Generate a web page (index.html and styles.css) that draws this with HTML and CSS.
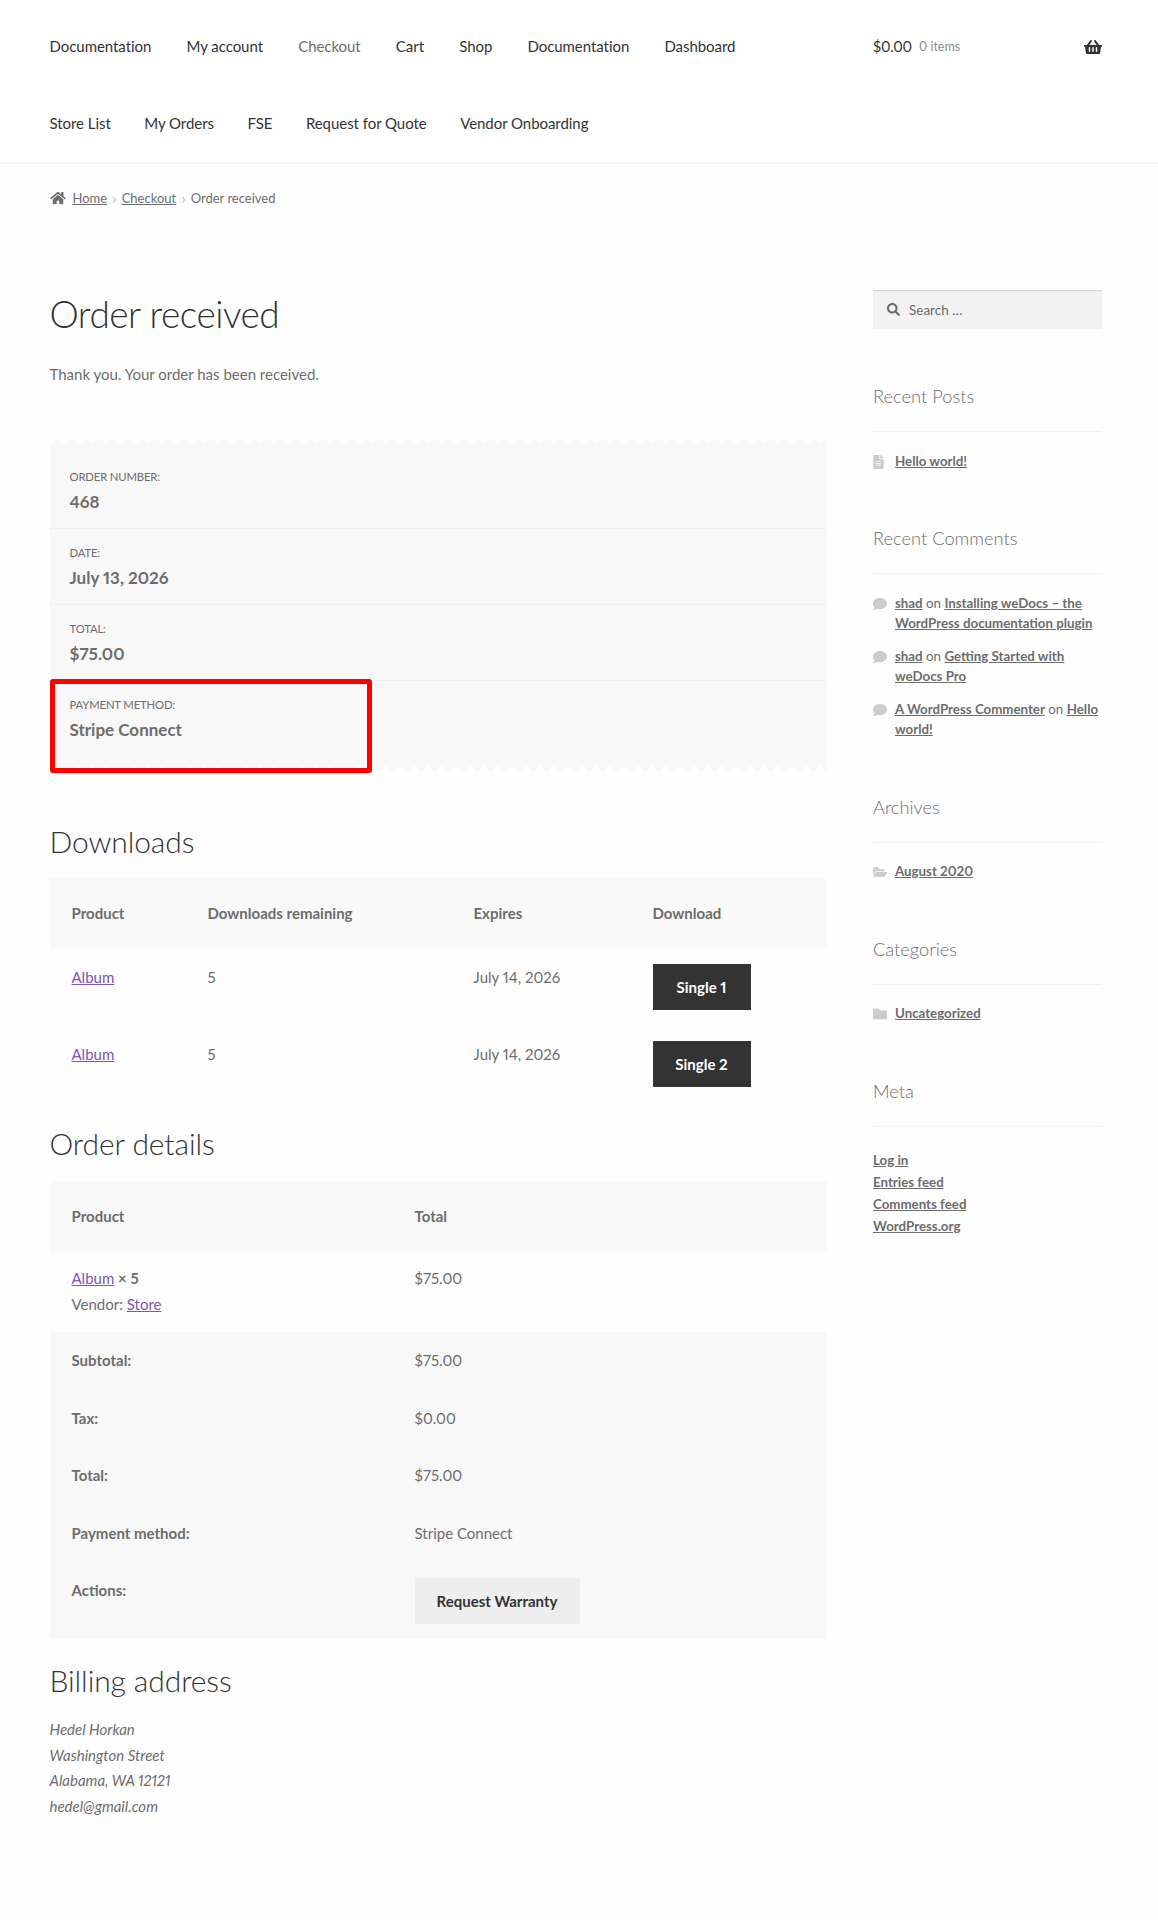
FILE: index.html
```html
<!DOCTYPE html>
<html lang="en">
<head>
<meta charset="utf-8">
<title>Order received</title>
<link rel="stylesheet" href="styles.css">
</head>
<body>
<header class="site-header">
  <nav class="main-nav">
    <div class="nav-row"><a href="#">Documentation</a><a href="#">My account</a><a href="#" class="current">Checkout</a><a href="#">Cart</a><a href="#">Shop</a><a href="#">Documentation</a><a href="#">Dashboard</a></div>
    <div class="nav-row nav-row-second"><a href="#">Store List</a><a href="#">My Orders</a><a href="#">FSE</a><a href="#">Request for Quote</a><a href="#">Vendor Onboarding</a></div>
  </nav>
  <div class="cart">
    <span class="cart-amount">$0.00</span><span class="cart-count">0 items</span>
    <svg class="cart-icon" viewBox="0 0 576 512"><path d="M576 216v16c0 13.255-10.745 24-24 24h-8l-26.113 182.788C514.509 462.435 494.257 480 470.37 480H105.63c-23.887 0-44.139-17.565-47.518-41.212L32 256h-8c-13.255 0-24-10.745-24-24v-16c0-13.255 10.745-24 24-24h67.341l106.78-146.821c10.395-14.292 30.407-17.453 44.701-7.058 14.293 10.395 17.453 30.408 7.058 44.701L170.477 192h235.046L326.12 82.821c-10.395-14.292-7.234-34.306 7.059-44.701 14.291-10.395 34.306-7.235 44.701 7.058L484.659 192H552c13.255 0 24 10.745 24 24zM312 392V280c0-13.255-10.745-24-24-24s-24 10.745-24 24v112c0 13.255 10.745 24 24 24s24-10.745 24-24zm112 0V280c0-13.255-10.745-24-24-24s-24 10.745-24 24v112c0 13.255 10.745 24 24 24s24-10.745 24-24zm-224 0V280c0-13.255-10.745-24-24-24s-24 10.745-24 24v112c0 13.255 10.745 24 24 24s24-10.745 24-24z"/></svg>
  </div>
</header>

<div class="breadcrumb">
  <svg class="home-icon" viewBox="0 0 576 512"><path d="M280.37 148.26L96 300.11V464a16 16 0 0 0 16 16l112.06-.29a16 16 0 0 0 15.92-16V368a16 16 0 0 1 16-16h64a16 16 0 0 1 16 16v95.64a16 16 0 0 0 16 16.05L464 480a16 16 0 0 0 16-16V300L295.67 148.26a12.19 12.19 0 0 0-15.3 0zM571.6 251.47L488 182.56V44.05a12 12 0 0 0-12-12h-56a12 12 0 0 0-12 12v72.61L318.47 43a48 48 0 0 0-61 0L4.34 251.47a12 12 0 0 0-1.6 16.9l25.5 31A12 12 0 0 0 45.15 301l235.22-193.74a12.19 12.19 0 0 1 15.3 0L530.9 301a12 12 0 0 0 16.9-1.6l25.5-31a12 12 0 0 0-1.7-16.93z"/></svg>
  <a href="#">Home</a><span class="sep">›</span><a href="#">Checkout</a><span class="sep">›</span><span>Order received</span>
</div>

<div class="content">
  <main class="main">
    <h1 class="page-title">Order received</h1>
    <p class="thanks">Thank you. Your order has been received.</p>

    <div class="order-box">
      <ul class="overview">
        <li><span class="ov-label">Order number:</span><strong class="ov-value">468</strong></li>
        <li><span class="ov-label">Date:</span><strong class="ov-value">July 13, 2026</strong></li>
        <li><span class="ov-label">Total:</span><strong class="ov-value">$75.00</strong></li>
        <li><span class="ov-label">Payment method:</span><strong class="ov-value">Stripe Connect</strong></li>
      </ul>
      <div class="highlight"></div>
    </div>

    <h2 class="section-title downloads-title">Downloads</h2>
    <table class="data-table downloads">
      <colgroup><col class="c1"><col class="c2"><col class="c3"><col class="c4"></colgroup>
      <thead>
        <tr><th>Product</th><th>Downloads remaining</th><th>Expires</th><th>Download</th></tr>
      </thead>
      <tbody>
        <tr><td><a href="#" class="plink">Album</a></td><td>5</td><td>July 14, 2026</td><td><a href="#" class="btn btn-dark">Single 1</a></td></tr>
        <tr><td><a href="#" class="plink">Album</a></td><td>5</td><td>July 14, 2026</td><td><a href="#" class="btn btn-dark">Single 2</a></td></tr>
      </tbody>
    </table>

    <h2 class="section-title">Order details</h2>
    <table class="data-table details">
      <colgroup><col class="d1"><col class="d2"></colgroup>
      <thead>
        <tr><th>Product</th><th>Total</th></tr>
      </thead>
      <tbody>
        <tr><td><a href="#" class="plink">Album</a> <strong>× 5</strong><br>Vendor: <a href="#" class="plink">Store</a></td><td>$75.00</td></tr>
      </tbody>
      <tfoot>
        <tr><th>Subtotal:</th><td>$75.00</td></tr>
        <tr><th>Tax:</th><td>$0.00</td></tr>
        <tr><th>Total:</th><td>$75.00</td></tr>
        <tr><th>Payment method:</th><td>Stripe Connect</td></tr>
        <tr class="actions"><th>Actions:</th><td><a href="#" class="btn btn-light">Request Warranty</a></td></tr>
      </tfoot>
    </table>

    <h2 class="section-title">Billing address</h2>
    <address class="address">Hedel Horkan<br>Washington Street<br>Alabama, WA 12121<br>hedel@gmail.com</address>
  </main>

  <aside class="sidebar">
    <div class="search">
      <svg class="search-icon" viewBox="0 0 512 512"><path d="M505 442.7L405.3 343c-4.5-4.5-10.6-7-17-7H372c27.6-35.3 44-79.7 44-128C416 93.1 322.9 0 208 0S0 93.1 0 208s93.1 208 208 208c48.3 0 92.7-16.4 128-44v16.3c0 6.4 2.5 12.5 7 17l99.7 99.7c9.4 9.4 24.6 9.4 33.9 0l28.3-28.3c9.4-9.4 9.4-24.6.1-34zM208 336c-70.7 0-128-57.2-128-128 0-70.7 57.2-128 128-128 70.7 0 128 57.2 128 128 0 70.7-57.2 128-128 128z"/></svg>
      <span>Search …</span>
    </div>

    <section class="widget">
      <h3 class="widget-title">Recent Posts</h3>
      <ul class="widget-list">
        <li><svg class="w-icon file" viewBox="0 0 384 512"><path d="M224 136V0H24C10.7 0 0 10.7 0 24v464c0 13.3 10.7 24 24 24h336c13.3 0 24-10.7 24-24V160H248c-13.2 0-24-10.8-24-24zm64 236c0 6.6-5.4 12-12 12H108c-6.6 0-12-5.4-12-12v-8c0-6.6 5.4-12 12-12h168c6.6 0 12 5.4 12 12v8zm0-64c0 6.6-5.4 12-12 12H108c-6.6 0-12-5.4-12-12v-8c0-6.6 5.4-12 12-12h168c6.6 0 12 5.4 12 12v8zm0-72v8c0 6.6-5.4 12-12 12H108c-6.6 0-12-5.4-12-12v-8c0-6.6 5.4-12 12-12h168c6.6 0 12 5.4 12 12zm96-114.1v6.1H256V0h6.1c6.4 0 12.5 2.5 17 7l97.9 98c4.5 4.5 7 10.6 7 16.9z"/></svg><div><a href="#">Hello world!</a></div></li>
      </ul>
    </section>

    <section class="widget">
      <h3 class="widget-title">Recent Comments</h3>
      <ul class="widget-list">
        <li><svg class="w-icon" viewBox="0 0 512 512"><path d="M256 32C114.6 32 0 125.1 0 240c0 49.6 21.4 95 57 130.7C44.5 421.1 2.7 466 2.2 466.5c-2.2 2.3-2.8 5.7-1.5 8.7S4.8 480 8 480c66.3 0 116-31.8 140.6-51.4 32.7 12.3 69 19.4 107.4 19.4 141.4 0 256-93.1 256-208S397.4 32 256 32z"/></svg><div><a href="#">shad</a> on <a href="#">Installing weDocs – the<br>WordPress documentation plugin</a></div></li>
        <li><svg class="w-icon" viewBox="0 0 512 512"><path d="M256 32C114.6 32 0 125.1 0 240c0 49.6 21.4 95 57 130.7C44.5 421.1 2.7 466 2.2 466.5c-2.2 2.3-2.8 5.7-1.5 8.7S4.8 480 8 480c66.3 0 116-31.8 140.6-51.4 32.7 12.3 69 19.4 107.4 19.4 141.4 0 256-93.1 256-208S397.4 32 256 32z"/></svg><div><a href="#">shad</a> on <a href="#">Getting Started with<br>weDocs Pro</a></div></li>
        <li><svg class="w-icon" viewBox="0 0 512 512"><path d="M256 32C114.6 32 0 125.1 0 240c0 49.6 21.4 95 57 130.7C44.5 421.1 2.7 466 2.2 466.5c-2.2 2.3-2.8 5.7-1.5 8.7S4.8 480 8 480c66.3 0 116-31.8 140.6-51.4 32.7 12.3 69 19.4 107.4 19.4 141.4 0 256-93.1 256-208S397.4 32 256 32z"/></svg><div><a href="#">A WordPress Commenter</a> on <a href="#">Hello<br>world!</a></div></li>
      </ul>
    </section>

    <section class="widget">
      <h3 class="widget-title">Archives</h3>
      <ul class="widget-list">
        <li><svg class="w-icon" viewBox="0 0 576 512"><path d="M572.694 292.093L500.27 416.248A63.997 63.997 0 0 1 444.989 448H45.025c-18.523 0-30.064-20.093-20.731-36.093l72.424-124.155A64 64 0 0 1 152 256h399.964c18.523 0 30.064 20.093 20.73 36.093zM152 224h328v-48c0-26.51-21.49-48-48-48H272l-64-64H48C21.49 64 0 85.49 0 112v278.046l69.077-118.418C86.214 242.25 117.989 224 152 224z"/></svg><div><a href="#">August 2020</a></div></li>
      </ul>
    </section>

    <section class="widget">
      <h3 class="widget-title">Categories</h3>
      <ul class="widget-list">
        <li><svg class="w-icon" viewBox="0 0 512 512"><path d="M464 128H272l-64-64H48C21.49 64 0 85.49 0 112v288c0 26.51 21.49 48 48 48h416c26.51 0 48-21.49 48-48V176c0-26.51-21.49-48-48-48z"/></svg><div><a href="#">Uncategorized</a></div></li>
      </ul>
    </section>

    <section class="widget">
      <h3 class="widget-title">Meta</h3>
      <ul class="meta-list">
        <li><a href="#">Log in</a></li>
        <li><a href="#">Entries feed</a></li>
        <li><a href="#">Comments feed</a></li>
        <li><a href="#">WordPress.org</a></li>
      </ul>
    </section>
  </aside>
</div>
</body>
</html>
```

FILE: styles.css
```css
* { box-sizing: border-box; }
html, body { margin: 0; padding: 0; }
body {
  background: #fefefe;
  color: #6d6d6d;
  font-family: "Lato", "Liberation Sans", sans-serif;
  font-size: 15px;
  line-height: 26px;
  font-variant-numeric: proportional-nums;
  min-height: 1920px;
}
ul { list-style: none; margin: 0; padding: 0; }
a { color: inherit; }

/* Header */
.site-header {
  display: flex;
  background: #fff;
  border-bottom: 1px solid #f0f0f0;
  padding: 8px 56px 0 49.5px;
  height: 164px;
  gap: 46.5px;
}
.main-nav { width: 777px; font-size: 15px; letter-spacing: -0.05px; }
.nav-row { display: flex; column-gap: 35.2px; height: 77px; }
.nav-row-second { column-gap: 33.5px; }
.nav-row a {
  color: #333;
  text-decoration: none;
  line-height: 77px;
}
.nav-row a.current { color: #6d6d6d; }
.cart {
  flex: 1;
  display: flex;
  align-items: center;
  height: 77px;
  color: #333;
}
.cart-amount { font-size: 14.5px; letter-spacing: -0.2px; }
.cart-count { margin-left: 7px; font-size: 12.5px; color: #8a8a8a; }
.cart-icon { margin-left: auto; width: 18px; height: 16px; fill: #333; }

/* Breadcrumb */
.breadcrumb {
  display: flex;
  align-items: center;
  padding: 21px 49.5px 0;
  height: 47px;
  font-size: 13px;
  color: #6d6d6d;
}
.home-icon { width: 16px; height: 14px; fill: #6d6d6d; margin-right: 7px; }
.sep { margin: 0 5px; color: #bbb; font-size: 16px; }

/* Layout */
.content {
  display: flex;
  gap: 46.5px;
  padding: 78px 56px 0 49.5px;
  align-items: flex-start;
}
.main { width: 777px; flex: none; }
.sidebar { flex: 1; padding-top: 1px; }

.page-title {
  margin: 0;
  color: #333;
  font-size: 37px;
  font-weight: 300;
  letter-spacing: -0.5px;
  line-height: 50px;
}
.thanks { margin: 22px 0 51px; }

/* Order overview */
.order-box {
  position: relative;
  background: #f8f8f8;
  padding: 15px 0 15px;
}
.order-box::before,
.order-box::after {
  content: "";
  position: absolute;
  left: 0;
  right: 0;
  height: 7px;
  background-size: 14px 14px;
  background-repeat: repeat-x;
}
.order-box::before {
  top: 0;
  background-image: linear-gradient(135deg, #fefefe 25%, transparent 25%), linear-gradient(225deg, #fefefe 25%, transparent 25%);
}
.order-box::after {
  bottom: 0;
  background-position: 0 100%;
  background-image: linear-gradient(45deg, #fefefe 25%, transparent 25%), linear-gradient(315deg, #fefefe 25%, transparent 25%);
}
.overview li {
  height: 76px;
  padding: 14px 20px 0;
  border-bottom: 1px solid #f1f1f1;
  display: flex;
  flex-direction: column;
}
.overview li:last-child { border-bottom: 0; }
.ov-label {
  font-size: 11.3px;
  letter-spacing: -0.15px;
  line-height: 20px;
  text-transform: uppercase;
}
.ov-value {
  font-size: 17px;
  line-height: 26px;
  margin-top: 2px;
  font-weight: 700;
}
.highlight {
  position: absolute;
  z-index: 1;
  left: 0;
  top: 241px;
  width: 322px;
  height: 94px;
  border: 5.5px solid #f00;
  border-radius: 3px;
}

/* Section titles */
.section-title {
  margin: 21px 0 18px;
  color: #333;
  font-size: 30px;
  font-weight: 300;
  letter-spacing: -0.1px;
  line-height: 40px;
}
.downloads-title { margin-top: 49px; margin-bottom: 17px; }

/* Tables */
.data-table {
  width: 777px;
  border-collapse: collapse;
  table-layout: fixed;
}
.data-table th, .data-table td {
  text-align: left;
  vertical-align: top;
  padding: 15px 22px 16.6px;
  font-weight: 400;
}
.data-table th { font-weight: 700; }
.data-table thead th {
  background: #f9f9f9;
  padding: 22px 22px;
}
.data-table tbody td { background: #fdfdfd; }
.data-table tfoot th, .data-table tfoot td { background: #f8f8f8; }
.c1 { width: 136px; }
.c2 { width: 266px; }
.c3 { width: 179px; }
.c4 { width: 196px; }
.d1 { width: 343px; }
.d2 { width: 434px; }
.data-table.downloads tbody td { padding: 16px 22px 15px; }
.data-table.details tbody td { padding: 14px 22px 15px; }
.details tbody strong { font-weight: 700; }
.data-table .actions td { padding: 16px 22px 15px; }
.plink { color: #7f54b3; }

.btn {
  display: inline-block;
  height: 46px;
  line-height: 46px;
  text-align: center;
  text-decoration: none;
  font-weight: 700;
  vertical-align: top;
}
.btn-dark { width: 98px; background: #333; color: #fff; }
.btn-light { width: 165px; background: #eee; color: #333; }

.address {
  font-style: italic;
  line-height: 25.7px;
  margin-top: -1.5px;
}

/* Sidebar */
.search {
  height: 39px;
  display: flex;
  align-items: center;
  gap: 9px;
  padding-left: 14px;
  background: #f2f2f2;
  box-shadow: inset 0 1px 1px rgba(0,0,0,0.125);
  font-size: 13.5px;
  color: #6d6d6d;
}
.search-icon { width: 13px; height: 13px; fill: #6d6d6d; }
.widget { margin-top: 52px; font-size: 13.3px; line-height: 19.8px; }
.widget-title {
  margin: 0 0 19.5px;
  padding-bottom: 20px;
  border-bottom: 1px solid #f2f2f2;
  color: #6d6d6d;
  font-size: 18.3px;
  font-weight: 300;
  line-height: 30px;
  height: 51px;
}
.widget-list { display: flex; flex-direction: column; gap: 13.5px; }
.widget-list li { display: flex; }
.widget-list li > div { flex: 1; white-space: nowrap; }
.widget a { font-weight: 700; color: #6d6d6d; }
.w-icon { flex: none; width: 14px; height: 14px; margin: 3px 8px 0 0; fill: #ccc; }
.w-icon.file { width: 11px; margin-right: 11px; }
.meta-list { line-height: 22px; margin-top: 21.5px; }
```
